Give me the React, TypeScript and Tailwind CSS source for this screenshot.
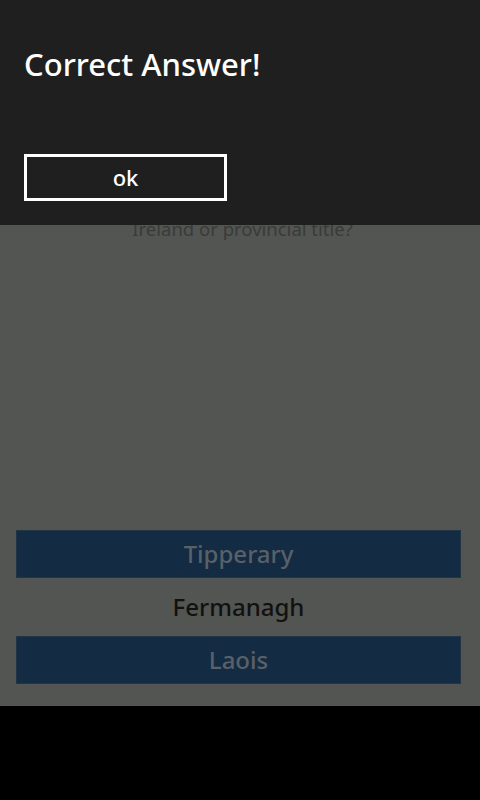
import React from 'react'

const answers = [
  { label: 'Tipperary', filled: true },
  { label: 'Fermanagh', filled: false },
  { label: 'Laois', filled: true },
]

export default function App() {
  return (
    <div className="h-[800px] w-[480px] bg-black flex flex-col" style={{ fontFamily: '"Noto Sans", "Open Sans", sans-serif' }}>
      <div className="relative h-[706px] bg-[#535552] flex flex-col pl-4 pr-[19px] pb-[22px]">
        {/* question text, the top of it is covered by the dialog */}
        <div className="pt-[212px] pl-2 text-center text-[18.5px] leading-[34px] text-[#393b39]">
          <p>Ireland or provincial title?</p>
        </div>

        <div className="flex-1" />

        <div className="flex flex-col gap-[5px]">
          {answers.map((a) => (
            <div
              key={a.label}
              className={
                a.filled
                  ? 'h-[48px] flex items-center justify-center bg-[#132c43] border border-[#223546] text-[24px] font-medium text-[#5a6068]'
                  : 'h-[48px] flex items-center justify-center text-[24px] font-medium text-[#111111]'
              }
            >
              {a.label}
            </div>
          ))}
        </div>

        {/* message box overlay */}
        <div className="absolute top-0 left-0 right-0 h-[225px] bg-[#1f1f1f] px-6 pt-[42px]">
          <h1 className="text-[31px] leading-[44px] font-medium text-white">Correct Answer!</h1>
          <button className="mt-[68px] w-[203px] h-[47px] border-[3px] border-white text-white text-[22px] font-medium flex items-center justify-center">
            ok
          </button>
        </div>
      </div>
    </div>
  )
}
